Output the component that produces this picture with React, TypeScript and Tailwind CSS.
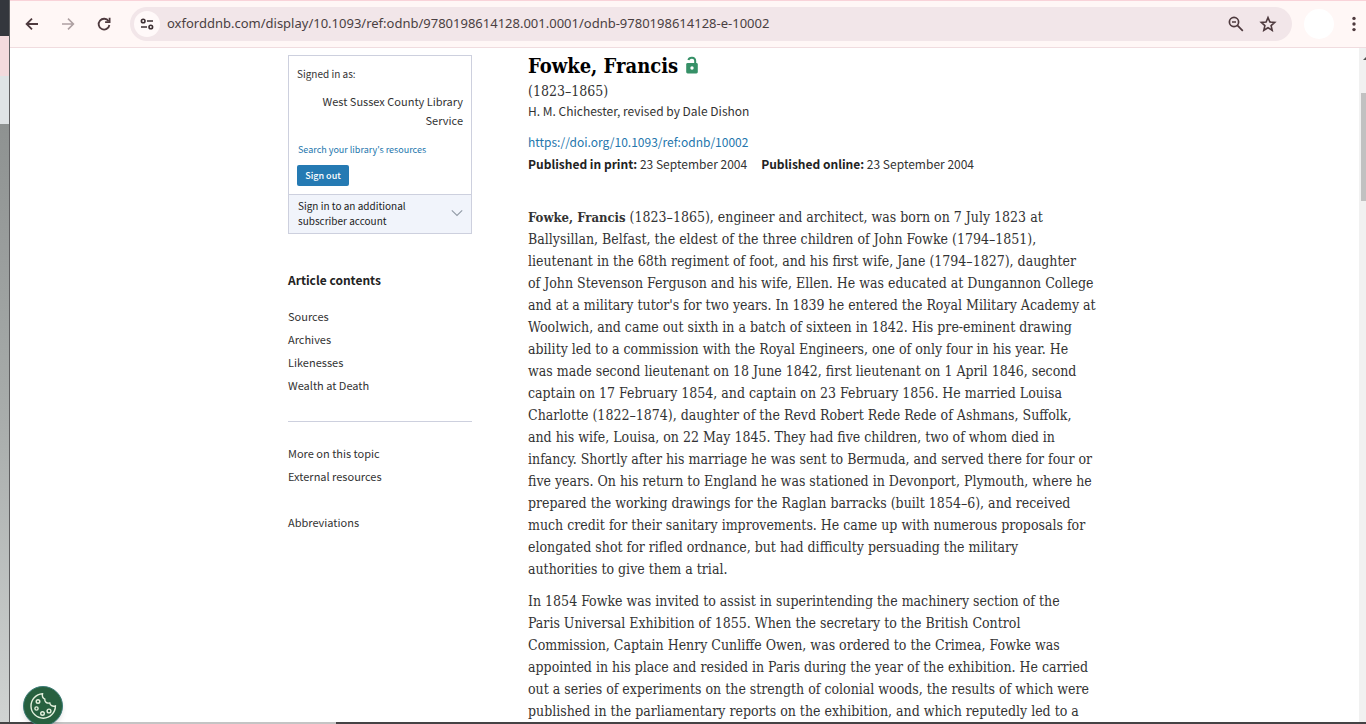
import React from "react";

const firstParagraph = [
  "Ballysillan, Belfast, the eldest of the three children of John Fowke (1794–1851),",
  "lieutenant in the 68th regiment of foot, and his first wife, Jane (1794–1827), daughter",
  "of John Stevenson Ferguson and his wife, Ellen. He was educated at Dungannon College",
  "and at a military tutor's for two years. In 1839 he entered the Royal Military Academy at",
  "Woolwich, and came out sixth in a batch of sixteen in 1842. His pre-eminent drawing",
  "ability led to a commission with the Royal Engineers, one of only four in his year. He",
  "was made second lieutenant on 18 June 1842, first lieutenant on 1 April 1846, second",
  "captain on 17 February 1854, and captain on 23 February 1856. He married Louisa",
  "Charlotte (1822–1874), daughter of the Revd Robert Rede Rede of Ashmans, Suffolk,",
  "and his wife, Louisa, on 22 May 1845. They had five children, two of whom died in",
  "infancy. Shortly after his marriage he was sent to Bermuda, and served there for four or",
  "five years. On his return to England he was stationed in Devonport, Plymouth, where he",
  "prepared the working drawings for the Raglan barracks (built 1854–6), and received",
  "much credit for their sanitary improvements. He came up with numerous proposals for",
  "elongated shot for rifled ordnance, but had difficulty persuading the military",
  "authorities to give them a trial.",
];

const secondParagraph = [
  "In 1854 Fowke was invited to assist in superintending the machinery section of the",
  "Paris Universal Exhibition of 1855. When the secretary to the British Control",
  "Commission, Captain Henry Cunliffe Owen, was ordered to the Crimea, Fowke was",
  "appointed in his place and resided in Paris during the year of the exhibition. He carried",
  "out a series of experiments on the strength of colonial woods, the results of which were",
  "published in the parliamentary reports on the exhibition, and which reputedly led to a",
];

function Lines({ lines }: { lines: string[] }) {
  return (
    <>
      {lines.map((line) => (
        <span key={line} className="block">
          {line}
        </span>
      ))}
    </>
  );
}

function IconButton({ label, className = "", children }: { label: string; className?: string; children?: React.ReactNode }) {
  return (
    <button type="button" aria-label={label} className={`flex shrink-0 items-center justify-center ${className}`}>
      {children}
    </button>
  );
}

function Toolbar() {
  return (
    <header className="flex h-12 shrink-0 items-center border-y border-t-[#f9d3d9] border-b-[#f0dcdf] bg-[#fff7f6] text-[#4e3a3e]">
      <IconButton label="Back" className="ml-3 size-5">
        <svg viewBox="0 0 20 20" className="size-5" fill="none" stroke="currentColor" strokeWidth="1.8">
          <path d="M16 10H5M10 4.6 4.6 10l5.4 5.4" />
        </svg>
      </IconButton>
      <IconButton label="Forward" className="ml-4 size-5 text-[#aea0a2]">
        <svg viewBox="0 0 20 20" className="size-5" fill="none" stroke="currentColor" strokeWidth="1.6">
          <path d="M4 10h11M10 4.6l5.4 5.4-5.4 5.4" />
        </svg>
      </IconButton>
      <IconButton label="Reload" className="ml-4 size-5">
        <svg viewBox="0 0 20 20" className="size-5" fill="none" stroke="currentColor" strokeWidth="1.8">
          <path d="M14.6 7.2A5.4 5.4 0 1 0 15.4 11" />
          <path d="M15.6 3.8v4.4h-4.5" />
        </svg>
      </IconButton>
      <div className="ml-4 flex h-[34px] flex-1 items-center rounded-full bg-[#f2e6e9] pr-[14px] pl-1">
        <IconButton label="View site information" className="size-[26px] rounded-full bg-[#fff9f9] text-[#3d3033]">
          <svg viewBox="0 0 16 16" className="size-4" fill="none" stroke="currentColor" strokeWidth="1.6">
            <circle cx="4.2" cy="5" r="1.8" />
            <path d="M8 5h6M2 11h6" />
            <circle cx="11.8" cy="11" r="1.8" />
          </svg>
        </IconButton>
        <input
          aria-label="Address and search bar"
          readOnly
          value="oxforddnb.com/display/10.1093/ref:odnb/9780198614128.001.0001/odnb-9780198614128-e-10002"
          className="ml-[7px] min-w-0 flex-1 bg-transparent font-['Noto_Sans',sans-serif] text-[13px] text-[#4a3f42] outline-none"
        />
        <IconButton label="Zoom" className="mr-3 size-5">
          <svg viewBox="0 0 20 20" className="size-5" fill="none" stroke="currentColor" strokeWidth="1.7">
            <circle cx="8" cy="8" r="4.6" />
            <path d="m11.4 11.4 5.4 5.4M6 8h4" />
          </svg>
        </IconButton>
        <IconButton label="Bookmark this tab" className="size-5">
          <svg viewBox="0 0 20 20" className="size-5" fill="none" stroke="currentColor" strokeWidth="1.6">
            <path d="m10 3.6 1.9 4.4 4.8.4-3.6 3.2 1.1 4.7-4.2-2.5-4.2 2.5 1.1-4.7-3.6-3.2 4.8-.4z" />
          </svg>
        </IconButton>
      </div>
      <IconButton label="Profile" className="ml-3 size-[30px] rounded-full bg-white" />
      <IconButton label="Menu" className="mr-[2px] ml-[10px] size-5">
        <svg viewBox="0 0 20 20" className="size-5" fill="currentColor">
          <circle cx="10" cy="4.4" r="1.7" />
          <circle cx="10" cy="10" r="1.7" />
          <circle cx="10" cy="15.6" r="1.7" />
        </svg>
      </IconButton>
    </header>
  );
}

function SideLinks({ items }: { items: string[] }) {
  return (
    <ul className="text-[11px] leading-[23px]">
      {items.map((item) => (
        <li key={item}>
          <a href="#article">{item}</a>
        </li>
      ))}
    </ul>
  );
}

function Sidebar() {
  return (
    <aside className="w-[184px] shrink-0 pt-[7px]">
      <section className="border border-[#cdd0de]">
        <div className="px-2 pt-[9px] pb-2">
          <p className="text-[10px] leading-[18px]">Signed in as:</p>
          <p className="mt-[9px] pl-3 text-right text-[11px] leading-[19px]">West Sussex County Library Service</p>
          <a href="#resources" className="mt-3 block pl-px text-[9px] leading-4 text-[#2476ad]">
            Search your library's resources
          </a>
          <button type="button" className="mt-[7px] block h-[21px] w-[52px] rounded-xs bg-[#257ab3] text-center text-[9px] leading-5 font-medium text-white">
            Sign out
          </button>
        </div>
        <button type="button" className="flex w-full items-center justify-between border-t border-[#cdd0de] bg-[#f1f4fb] pt-[3px] pr-2 pb-[5px] pl-[9px] text-left text-[10px] leading-[15px] text-[#1c1c1c]">
          <span>
            Sign in to an additional
            <br />
            subscriber account
          </span>
          <svg viewBox="0 0 12 12" className="size-3" fill="none" stroke="#929aa6" strokeWidth="1.1">
            <path d="m.8 3.4 5.2 5 5.2-5" />
          </svg>
        </button>
      </section>
      <nav aria-label="Article contents">
        <h2 className="mt-9 mb-[15px] text-[12px] leading-5 font-bold text-[#222]">Article contents</h2>
        <SideLinks items={["Sources", "Archives", "Likenesses", "Wealth at Death"]} />
        <hr className="mt-6 mb-5 border-[#cdd0de]" />
        <SideLinks items={["More on this topic", "External resources"]} />
        <div className="mt-[23px]">
          <SideLinks items={["Abbreviations"]} />
        </div>
      </nav>
    </aside>
  );
}

function Article() {
  return (
    <article id="article" className="min-w-0 flex-1 whitespace-nowrap">
      <h1 className="flex items-center gap-2 pt-[3px] font-['DejaVu_Serif_Condensed','DejaVu_Serif',serif] text-[20px] leading-[30px] font-bold text-black">
        Fowke, Francis
        <svg viewBox="0 0 12 18" role="img" aria-label="Open access" className="mb-[2px] h-[18px] w-3">
          <path d="M2.4 4C3.2.8 9.2.8 9.2 4.8V8" fill="none" stroke="#369067" strokeWidth="2" />
          <rect x=".2" y="7" width="11.6" height="10.4" rx="1.4" fill="#369067" />
          <circle cx="6" cy="12" r="1.7" fill="#fff" />
        </svg>
      </h1>
      <p className="font-['DejaVu_Serif_Condensed','DejaVu_Serif',serif] text-[14px] leading-5">(1823–1865)</p>
      <p className="text-[12px] leading-5">H. M. Chichester, revised by Dale Dishon</p>
      <p className="mt-[10px] text-[12px] leading-[22px]">
        <a href="https://doi.org/10.1093/ref:odnb/10002" className="text-[#2476ad]">
          https://doi.org/10.1093/ref:odnb/10002
        </a>
      </p>
      <p className="flex gap-[14px] text-[12px] leading-[22px]">
        <span><b className="text-[#222]">Published in print:</b> 23 September 2004</span>
        <span><b className="text-[#222]">Published online:</b> 23 September 2004</span>
      </p>
      <div className="mt-[31px] flex flex-col gap-[10px] font-['DejaVu_Serif_Condensed','DejaVu_Serif',serif] text-[14px] leading-[22px]">
        <p>
          <span className="block">
            <b className="text-[13px] leading-none">Fowke, Francis</b> (1823–1865), engineer and architect, was born on 7 July 1823 at
          </span>
          <Lines lines={firstParagraph} />
        </p>
        <p>
          <Lines lines={secondParagraph} />
        </p>
      </div>
    </article>
  );
}

export default function App() {
  return (
    <div className="relative flex h-screen flex-col overflow-hidden bg-white">
      <div className="flex min-h-0 flex-1">
        <div className="flex w-[10px] shrink-0 flex-col border-r border-[#5f5f61]">
          <div className="h-9 bg-[#34373d]" />
          <div className="h-10 bg-[#f3dadd]" />
          <div className="h-12 bg-[#dfe3e5]" />
          <div className="flex-1 bg-linear-to-b from-[#8e9291] via-[#a9adac] to-[#d0d3d2]" />
        </div>
        <div className="flex min-w-0 flex-1 flex-col">
          <Toolbar />
          <div className="flex min-h-0 flex-1">
            <main className="min-w-0 flex-1 overflow-hidden font-['Noto_Sans_CJK_SC',sans-serif] text-[#333]">
              <div className="mx-auto flex max-w-[793px] gap-14">
                <Sidebar />
                <Article />
              </div>
            </main>
            <div className="w-[7px] shrink-0 bg-[#f1f1f1] pl-[2px]">
              <svg viewBox="0 0 5 45" className="h-[45px] w-[5px]" fill="#505050">
                <path d="m2 12 4-4v4z" />
              </svg>
              <div className="h-[108px] bg-[#c1c1c1]" />
            </div>
          </div>
        </div>
      </div>
      <div className="flex h-[2px] shrink-0">
        <div className="w-12 bg-[#444]" />
        <div className="w-72 bg-[#c4c4c4]" />
        <div className="flex-1 bg-[#454345]" />
      </div>
      <button type="button" aria-label="Cookie settings" className="absolute -bottom-[2px] left-[23px] flex size-10 items-center justify-center rounded-full border border-[#3d7d78] bg-[#27603f] shadow-md">
        <svg viewBox="0 0 28 28" className="size-7" fill="none" stroke="#e4f0dd" strokeWidth="1.4">
          <path d="M13.5 1.8A12.2 12.2 0 1 0 26.4 14c-3 .8-5.3-.5-5.6-3-3 .6-5.4-1-5-3.8-1.9-1-2.8-3-2.3-5.4z" />
          <circle cx="9" cy="9.5" r="1.8" />
          <circle cx="7.5" cy="16.5" r="1.6" />
          <circle cx="13.5" cy="21.5" r="1.8" />
          <circle cx="20" cy="19" r="1.9" />
        </svg>
      </button>
    </div>
  );
}
